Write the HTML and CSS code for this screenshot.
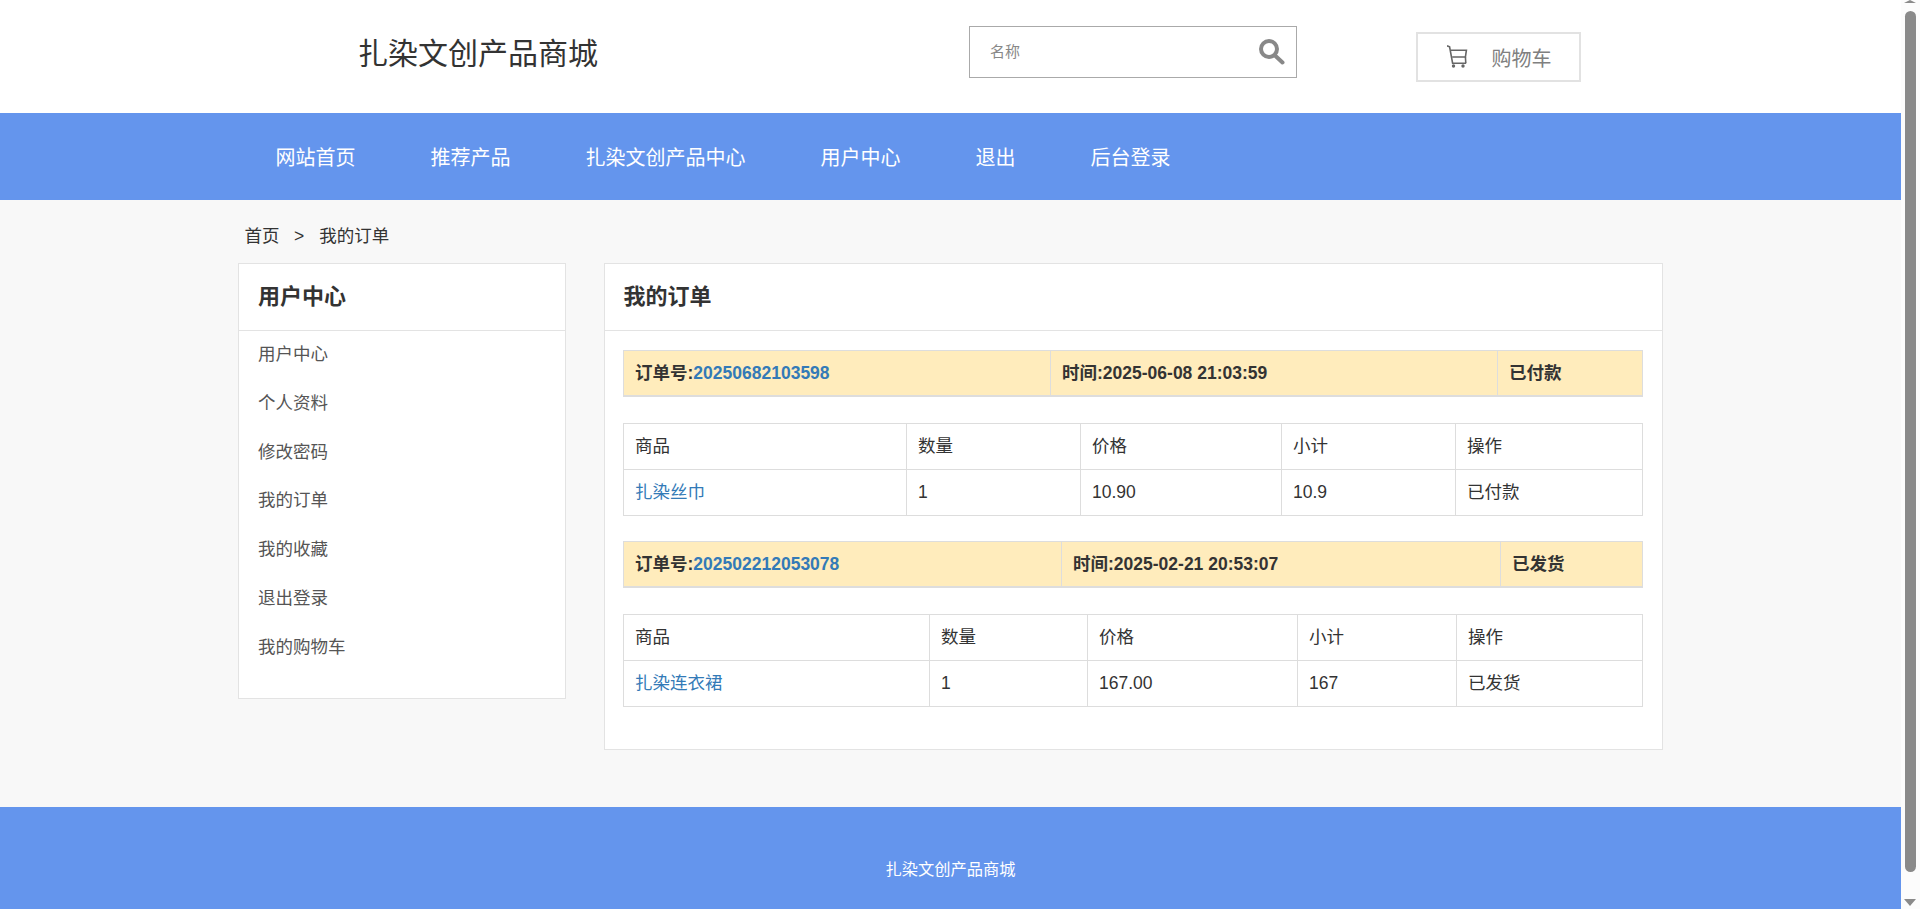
FILE: index.html
```html
<!DOCTYPE html>
<html lang="zh-CN">
<head>
<meta charset="utf-8">
<title>我的订单</title>
<link rel="stylesheet" href="styles.css">
</head>
<body>
<div class="page">
  <header class="top">
    <div class="brand">扎染文创产品商城</div>
    <div class="search">
      <span class="search-ph">名称</span>
      <svg class="search-ico" viewBox="0 0 26 26"><circle cx="10" cy="10" r="8" fill="none" stroke="#888" stroke-width="4"/><path d="M16 16.5l7.5 7" stroke="#888" stroke-width="4" stroke-linecap="round"/></svg>
    </div>
    <div class="cart">
      <svg class="cart-ico" viewBox="0 0 22 24" fill="none" stroke="#666" stroke-width="1.6"><path d="M0 0.8l2.6 1 3 16.4h13.6"/><path d="M4 5.2h15.4l-1 6.8H5.2"/><path d="M18.4 12l.4 6"/><circle cx="6.5" cy="21" r="1.7" fill="#666" stroke="none"/><circle cx="16" cy="21" r="1.7" fill="#666" stroke="none"/></svg>
      <span class="cart-label">购物车</span>
    </div>
  </header>
  <nav class="nav">
    <a>网站首页</a><a>推荐产品</a><a>扎染文创产品中心</a><a>用户中心</a><a>退出</a><a>后台登录</a>
  </nav>
  <main class="wrap">
    <div class="crumb"><span>首页</span><span class="sep">&gt;</span><span>我的订单</span></div>
    <div class="cols">
      <aside class="side">
        <h3 class="panel-title">用户中心</h3>
        <ul class="side-list">
          <li>用户中心</li><li>个人资料</li><li>修改密码</li><li>我的订单</li><li>我的收藏</li><li>退出登录</li><li>我的购物车</li>
        </ul>
      </aside>
      <section class="content">
        <h3 class="panel-title">我的订单</h3>
        <div class="orders">
          <table class="order-head oh-a">
            <colgroup><col class="c1"><col class="c2"><col></colgroup>
            <tr><td>订单号:<a class="link">20250682103598</a></td><td>时间:2025-06-08 21:03:59</td><td>已付款</td></tr>
          </table>
          <table class="items it-a">
            <colgroup><col class="c1"><col class="c2"><col class="c3"><col class="c4"><col></colgroup>
            <tr><td>商品</td><td>数量</td><td>价格</td><td>小计</td><td>操作</td></tr>
            <tr><td><a class="link">扎染丝巾</a></td><td>1</td><td>10.90</td><td>10.9</td><td>已付款</td></tr>
          </table>
          <table class="order-head oh-b">
            <colgroup><col class="c1"><col class="c2"><col></colgroup>
            <tr><td>订单号:<a class="link">202502212053078</a></td><td>时间:2025-02-21 20:53:07</td><td>已发货</td></tr>
          </table>
          <table class="items it-b">
            <colgroup><col class="c1"><col class="c2"><col class="c3"><col class="c4"><col></colgroup>
            <tr><td>商品</td><td>数量</td><td>价格</td><td>小计</td><td>操作</td></tr>
            <tr><td><a class="link">扎染连衣裙</a></td><td>1</td><td>167.00</td><td>167</td><td>已发货</td></tr>
          </table>
        </div>
      </section>
    </div>
  </main>
  <footer class="foot">扎染文创产品商城</footer>
</div>
<div class="sb"><i class="sb-up"></i><i class="sb-thumb"></i><i class="sb-down"></i></div>
</body>
</html>
```
FILE: styles.css
```css
* { box-sizing: border-box; }
html, body { margin: 0; height: 100%; overflow: hidden; }
body {
  font-family: "Liberation Sans", "Noto Sans CJK SC", sans-serif;
  font-size: 17.5px;
  line-height: 25px;
  color: #333;
  background: #f8f8f8;
}
.page { width: 1901px; }
.top { height: 113px; background: #fff; position: relative; display: flex; }
.brand { margin: 36px 0 0 358px; width: 611px; font-size: 30px; line-height: 36px; color: #333; }
.search {
  width: 328px; height: 52px; margin-top: 26px; border: 1px solid #aaa; background: #fff;
  display: flex; align-items: center; justify-content: space-between; padding: 0 11px 0 20px;
}
.search-ph { font-size: 15px; color: #888; margin-bottom: 2px; }
.search-ico { width: 26px; height: 26px; }
.cart {
  width: 165px; height: 50px; margin: 32px 0 0 119px; border: 2px solid #e2e2e2; background: #fff;
  display: flex; align-items: center; padding-left: 29px;
}
.cart-ico { width: 22px; height: 24px; }
.cart-label { font-size: 20px; color: #808080; margin: 4px 0 0 22.5px; }
.nav { height: 87px; background: #6495ed; display: flex; align-items: center; padding: 4px 0 0 238px; }
.nav a { font-size: 20px; color: #fff; padding: 0 37.5px; }
.wrap { width: 1425px; margin: 0 0 0 238px; }
.crumb { height: 63px; padding: 24px 0 0 6.5px; color: #333; }
.crumb .sep { margin: 0 15px 0 14.5px; }
.cols { display: flex; justify-content: space-between; align-items: flex-start; }
.side, .content { background: #fff; border: 1px solid #e3e3e3; }
.side { width: 328px; height: 436px; }
.content { width: 1059px; height: 487px; }
.panel-title {
  margin: 0; height: 67px; border-bottom: 1px solid #e3e3e3; padding-left: 19px;
  font-size: 22px; line-height: 66px; font-weight: 700; color: #333;
}
.content .panel-title { padding-left: 18.5px; }
.side-list { list-style: none; margin: 0; padding: 0; }
.side-list li { height: 48.75px; line-height: 47px; padding-left: 19px; color: #555; }
.orders { padding: 19px 19px 0 18px; }
table { width: 100%; border-collapse: collapse; table-layout: fixed; }
td { border: 1px solid #ddd; padding: 10px 10px 10px 11px; }
.link { color: #337ab7; }
.order-head { background: #ffecbc; font-weight: 700; border-bottom: 2px solid #ddd; margin-bottom: 26px; }
.order-head td { padding-bottom: 9px; }
.items { margin-bottom: 25px; }
.oh-a .c1 { width: 427px; } .oh-a .c2 { width: 447px; }
.oh-b .c1 { width: 438px; } .oh-b .c2 { width: 439px; }
.it-a .c1 { width: 283px; } .it-a .c2 { width: 174px; } .it-a .c3 { width: 201px; } .it-a .c4 { width: 174px; }
.it-b .c1 { width: 306px; } .it-b .c2 { width: 158px; } .it-b .c3 { width: 210px; } .it-b .c4 { width: 159px; }
.foot { margin-top: 57px; padding-top: 1px; height: 124px; background: #6495ed; color: #fff; font-size: 16.25px; line-height: 122px; text-align: center; }
.sb { position: fixed; top: 0; right: 0; bottom: 0; width: 19px; background: #fcfcfc; }
.sb-thumb { position: absolute; left: 4px; top: 11px; bottom: 37px; width: 11px; border-radius: 6px; background: #8a8a8a; }
.sb-up, .sb-down { position: absolute; left: 3px; width: 0; height: 0; border-left: 6.5px solid transparent; border-right: 6.5px solid transparent; }
.sb-up { top: 0; border-bottom: 3px solid #8a8a8a; }
.sb-down { bottom: 3px; border-top: 7px solid #8a8a8a; }
```
